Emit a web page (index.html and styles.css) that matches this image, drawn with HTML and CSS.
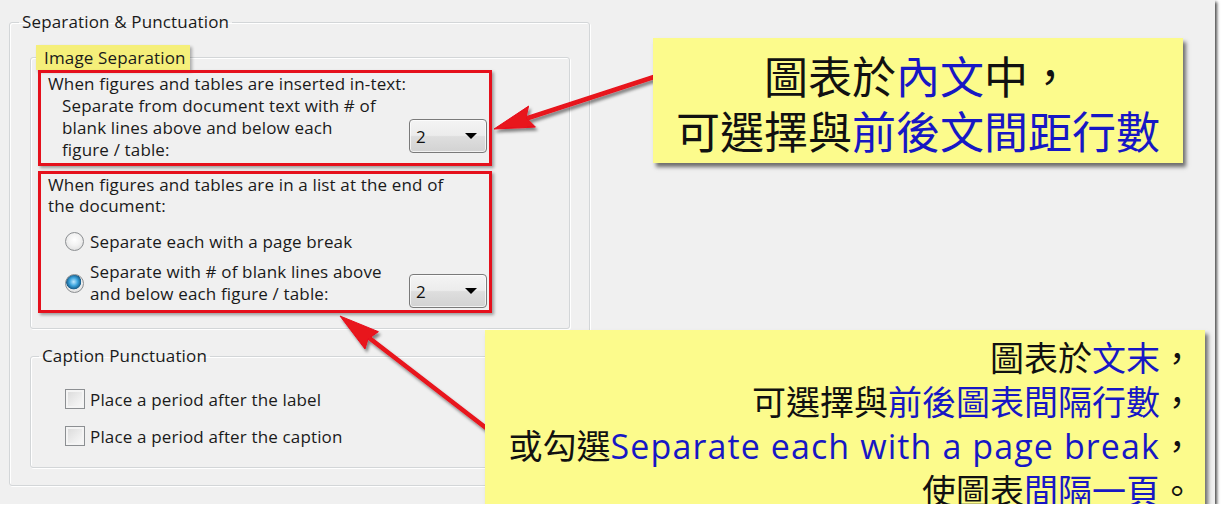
FILE: index.html
```html
<!DOCTYPE html>
<html lang="zh-Hant">
<head>
<meta charset="utf-8">
<title>Separation &amp; Punctuation</title>
<link rel="stylesheet" href="styles.css">
</head>
<body>
<div class="window">
  <fieldset class="group outer">
    <legend class="lg-outer">Separation &amp; Punctuation</legend>
    <fieldset class="group inner">
      <legend class="lg-hl">Image Separation</legend>
      <div class="mark mark1">
        <p class="line">When figures and tables are inserted in-text:</p>
        <div class="opt-row">
          <p class="sub">Separate from document text with # of<br>blank lines above and below each<br>figure / table:</p>
          <div class="select sel1"><span class="val">2</span><span class="caret"></span></div>
        </div>
      </div>
      <div class="mark mark2">
        <p class="line2">When figures and tables are in a list at the end of<br>the document:</p>
        <div class="radio-row rr1"><span class="radio"></span><span class="rtext">Separate each with a page break</span></div>
        <div class="radio-row rr2">
          <span class="radio checked"></span>
          <span class="rtext">Separate with # of blank lines above<br>and below each figure / table:</span>
          <div class="select sel2"><span class="val">2</span><span class="caret"></span></div>
        </div>
      </div>
    </fieldset>
    <fieldset class="group caption">
      <legend class="lg-cap">Caption Punctuation</legend>
      <div class="check-row cr1"><span class="check"></span><span>Place a period after the label</span></div>
      <div class="check-row cr2"><span class="check"></span><span>Place a period after the caption</span></div>
    </fieldset>
  </fieldset>

  <svg class="arrows" width="1215" height="513" viewBox="0 0 1215 513" aria-hidden="true">
    <defs>
      <filter id="sh" x="-20%" y="-20%" width="140%" height="140%">
        <feDropShadow dx="2" dy="3" stdDeviation="1.8" flood-color="#000" flood-opacity="0.45"/>
      </filter>
    </defs>
    <g filter="url(#sh)" fill="#e8121c" stroke="#e8121c">
      <line x1="660" y1="75" x2="528" y2="118" stroke-width="4.5" stroke-linecap="round"/>
      <polygon points="494,129 528.6,106.1 526,117.5 535.4,127.1" stroke-width="1" stroke-linejoin="round"/>
      <line x1="490" y1="431" x2="368" y2="337" stroke-width="4.5" stroke-linecap="round"/>
      <polygon points="340,316 378.4,331.7 368,339 365,349" stroke-width="1" stroke-linejoin="round"/>
    </g>
  </svg>

  <div class="note note1">
    <div class="nl">圖表於<span class="blue">內文</span>中，</div>
    <div class="nl">可選擇與<span class="blue">前後文間距行數</span></div>
  </div>
  <div class="note note2">
    <div class="nl">圖表於<span class="blue">文末</span>，</div>
    <div class="nl">可選擇與<span class="blue">前後圖表間隔行數</span>，</div>
    <div class="nl">或勾選<span class="blue latin">Separate each with a page break</span>，</div>
    <div class="nl">使圖表<span class="blue">間隔一頁</span>。</div>
  </div>
</div>
</body>
</html>
```

FILE: styles.css
```css
html, body {
  margin: 0;
  padding: 0;
  background: #ffffff;
}

body {
  font-family: "Open Sans", "Noto Sans", sans-serif;
  color: #1a1a1a;
}

p {
  margin: 0;
}

.window {
  position: relative;
  width: 1215px;
  height: 504px;
  box-sizing: border-box;
  padding: 12px 0 0 9px;
  background: #f0f0f0;
  box-shadow: 2px 2px 3px rgba(0, 0, 0, 0.7);
  font-size: 17px;
  letter-spacing: 0.15px;
  white-space: nowrap;
}

.group {
  margin: 0;
  padding: 0;
  min-width: 0;
  box-sizing: border-box;
  border: 1px solid #d3d6d8;
  border-radius: 3px;
  box-shadow: inset 1px 1px 0 #ffffff, 1px 1px 0 #ffffff;
}

legend {
  padding: 0 3px;
  line-height: 20px;
  color: #1a1a1a;
  font-size: 17px;
}

.outer {
  width: 581px;
  height: 474px;
  padding: 13px 0 0 0;
}

.lg-outer {
  margin-left: 9px;
}

.inner {
  margin-left: 20px;
  width: 540px;
  padding: 0 0 15px 0;
}

.lg-hl {
  margin-left: 5px;
  padding: 0 4px 0 8px;
  line-height: 25px;
  background: #f5ef7a;
  box-shadow: 2px 2px 3px rgba(0, 0, 0, 0.3);
}

.mark {
  margin-left: 7px;
  width: 454px;
  box-sizing: border-box;
  border: 3px solid #e5101c;
  box-shadow: 2px 2px 3px rgba(0, 0, 0, 0.35);
  padding: 0 2px 0 7px;
}

.mark1 {
  height: 96px;
}

.mark1 .line {
  line-height: 22px;
}

.opt-row {
  display: flex;
  align-items: flex-end;
}

.sub {
  margin-left: 14px;
  line-height: 22px;
  flex: 1;
}

.select {
  position: relative;
  flex: none;
  width: 78px;
  height: 34px;
  box-sizing: border-box;
  border: 1px solid #7a7a7a;
  border-radius: 4px;
  background: linear-gradient(#f4f4f4 0%, #ececec 48%, #dedede 52%, #d2d2d2 100%);
  box-shadow: inset 0 0 0 1px rgba(255, 255, 255, 0.7);
  display: flex;
  align-items: center;
  padding-left: 6px;
}

.sel1 {
  margin-bottom: 8px;
}

.val {
  font-size: 17px;
  color: #111;
}

.caret {
  position: absolute;
  right: 9px;
  top: 13px;
  width: 0;
  height: 0;
  border-left: 6px solid transparent;
  border-right: 6px solid transparent;
  border-top: 6px solid #000;
}

.mark2 {
  margin-top: 5px;
  height: 142px;
}

.line2 {
  line-height: 21px;
}

.radio-row {
  display: flex;
  align-items: center;
  margin-left: 17px;
}

.rr1 {
  margin-top: 14px;
  height: 22px;
}

.rr2 {
  margin-top: 9px;
}

.rr2 .rtext {
  line-height: 22px;
  flex: 1;
}

.sel2 {
  align-self: flex-end;
  margin-bottom: -3px;
}

.radio {
  flex: none;
  width: 19px;
  height: 19px;
  box-sizing: border-box;
  border-radius: 50%;
  border: 1px solid #8c8f92;
  background: radial-gradient(circle at 50% 40%, #ffffff 0%, #f2f2f2 45%, #d6d6d6 100%);
  margin-right: 6px;
}

.radio.checked {
  background:
    radial-gradient(circle at 45% 40%, #bfe8ff 0%, #3aa3dc 30%, #1a5f8c 52%, transparent 57%),
    radial-gradient(circle at 50% 40%, #ffffff 0%, #f2f2f2 45%, #d6d6d6 100%);
}

.caption {
  margin-top: 17px;
  margin-left: 20px;
  width: 540px;
  padding: 22px 0 20px 0;
}

.lg-cap {
  margin-left: 8px;
}

.check-row {
  display: flex;
  align-items: center;
  height: 22px;
  margin-left: 34px;
}

.cr2 {
  margin-top: 15px;
}

.check {
  flex: none;
  width: 20px;
  height: 20px;
  box-sizing: border-box;
  border: 1px solid #8c8f92;
  background: linear-gradient(135deg, #d8d8d8 0%, #eeeeee 60%, #fafafa 100%);
  box-shadow: inset 0 0 0 2px #f4f4f4;
  margin-right: 5px;
}

.arrows {
  position: absolute;
  left: 0;
  top: 0;
  pointer-events: none;
}

.note {
  position: absolute;
  box-sizing: border-box;
  background: #fcfb8c;
  box-shadow: 3px 4px 4px rgba(0, 0, 0, 0.55);
  font-family: "Noto Sans CJK TC", "Noto Sans CJK SC", sans-serif;
  color: #111;
  letter-spacing: 0;
  white-space: nowrap;
}

.note1 {
  left: 653px;
  top: 38px;
  width: 530px;
  height: 125px;
  padding-top: 10px;
  font-size: 44px;
  line-height: 55px;
  text-align: center;
}

.note2 {
  left: 485px;
  top: 330px;
  width: 720px;
  height: 176px;
  padding: 5px 11px 0 0;
  font-size: 34px;
  line-height: 44px;
  text-align: right;
}

.blue {
  color: #1717c4;
}

.latin {
  font-family: "Open Sans", "Noto Sans CJK TC", sans-serif;
  letter-spacing: 1.1px;
}
```
